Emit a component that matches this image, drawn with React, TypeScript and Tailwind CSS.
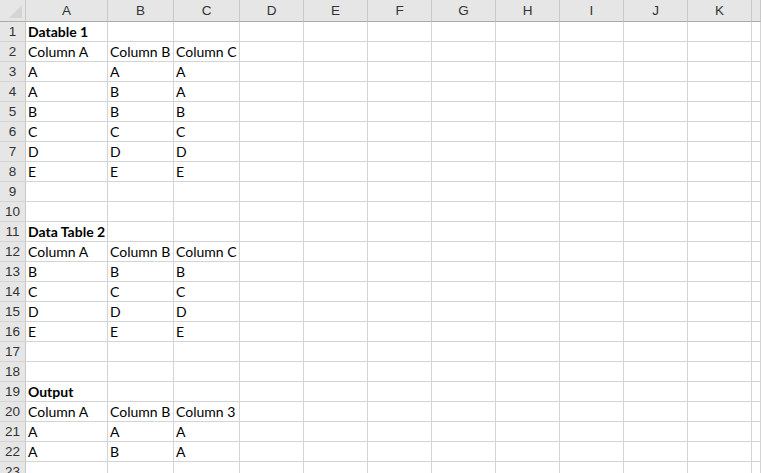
import React from 'react'

const cols = ['A', 'B', 'C', 'D', 'E', 'F', 'G', 'H', 'I', 'J', 'K', '']

type Row = { cells: string[], bold?: boolean }

const rows: Row[] = [
  { cells: ['Datable 1'], bold: true },
  { cells: ['Column A', 'Column B', 'Column C'] },
  { cells: ['A', 'A', 'A'] },
  { cells: ['A', 'B', 'A'] },
  { cells: ['B', 'B', 'B'] },
  { cells: ['C', 'C', 'C'] },
  { cells: ['D', 'D', 'D'] },
  { cells: ['E', 'E', 'E'] },
  { cells: [] },
  { cells: [] },
  { cells: ['Data Table 2'], bold: true },
  { cells: ['Column A', 'Column B', 'Column C'] },
  { cells: ['B', 'B', 'B'] },
  { cells: ['C', 'C', 'C'] },
  { cells: ['D', 'D', 'D'] },
  { cells: ['E', 'E', 'E'] },
  { cells: [] },
  { cells: [] },
  { cells: ['Output'], bold: true },
  { cells: ['Column A', 'Column B', 'Column 3'] },
  { cells: ['A', 'A', 'A'] },
  { cells: ['A', 'B', 'A'] },
  { cells: [] },
]

const App = () => {
  return (
    <div className="w-[761px] h-[473px] overflow-hidden bg-white">
      <div className="grid grid-cols-[26px_82px_66px_66px_64px_64px_64px_64px_64px_64px_64px_64px_1fr]">
        {/* header row */}
        <div className="h-[22px] bg-[#e6e6e6] border-r border-b border-r-[#c8c8c8] border-b-[#ababab] relative">
          <svg width="26" height="21" className="absolute left-0 top-0">
            <polygon points="9,18 22,18 22,5" fill="#d4d4d4" />
          </svg>
        </div>
        {cols.map((c, i) => (
          <div key={i} className="h-[22px] bg-[#e6e6e6] border-r border-b border-r-[#c8c8c8] border-b-[#ababab] flex items-center justify-center pt-[1px] text-[13.5px] text-[#333] font-['Liberation_Sans',sans-serif]">
            {c}
          </div>
        ))}

        {rows.map((r, ri) => (
          <React.Fragment key={ri}>
            <div className="h-[20px] bg-[#e6e6e6] border-r border-b border-r-[#c8c8c8] border-b-[#d4d4d4] flex items-center justify-center pt-[1px] text-[13.5px] text-[#333] font-['Liberation_Sans',sans-serif]">
              {ri + 1}
            </div>
            {cols.map((_, ci) => (
              <div key={ci} className={"h-[20px] border-r border-b border-[#d4d4d4] flex items-end pl-[2px] pb-[1px] whitespace-nowrap overflow-visible text-[14px] leading-[16px] text-black font-['Lato',sans-serif]" + (r.bold ? ' font-bold' : '')}>
                {r.cells[ci] || ''}
              </div>
            ))}
          </React.Fragment>
        ))}
      </div>
    </div>
  )
}

export default App
